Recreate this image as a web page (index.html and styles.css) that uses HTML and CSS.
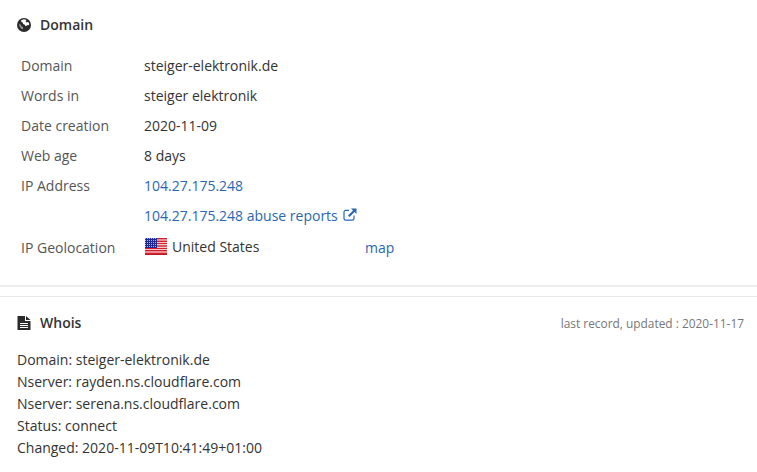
FILE: index.html
```html
<!DOCTYPE html>
<html lang="en">
<head>
<meta charset="utf-8">
<title>Domain</title>
<link rel="stylesheet" href="styles.css">
</head>
<body>
<section class="domain">
  <h2 class="head"><svg class="ico" viewBox="0 0 14 14"><circle cx="7" cy="7" r="7" fill="#2b2b2b"/><path fill="#fff" d="M4 2.200 7 1.200 9.500 2 8.500 3.200 9.800 4.500 11 3.800 12.300 5.800 12 7 10.300 7.300 8.700 8.200 7.800 6.700 6.200 6 5.800 4.600 4.600 4.200z"/><path fill="#fff" d="M2 6l1.500.6 1 1.800 1.600.8-.3 2.300-1.500-1L2.600 8.500z" opacity=".55"/></svg>Domain</h2>
  <div class="grid">
    <div class="lbl">Domain</div><div>steiger-elektronik.de</div>
    <div class="lbl">Words in</div><div>steiger elektronik</div>
    <div class="lbl">Date creation</div><div>2020-11-09</div>
    <div class="lbl">Web age</div><div>8 days</div>
    <div class="lbl">IP Address</div><div><a href="#">104.27.175.248</a></div>
    <div></div><div><a href="#">104.27.175.248 abuse reports <svg class="ext" viewBox="0 0 14 13"><path fill="none" stroke="currentColor" stroke-width="1.200" d="M11 7.500v3a1.600 1.600 0 0 1-1.600 1.600H2.600A1.600 1.600 0 0 1 1 10.500V4a1.600 1.600 0 0 1 1.600-1.600H6"/><path fill="currentColor" d="M8 .5h5.500V6l-2-2-5 5-1.500-1.500 5-5z"/></svg></a></div>
    <div class="lbl geo">IP Geolocation</div>
    <div class="geo-val"><span class="country"><svg class="flag" viewBox="0 0 22 17"><defs><pattern id="stars" width="2" height="2" patternUnits="userSpaceOnUse"><rect width="2" height="2" fill="#1f2a96"/><rect width="1" height="1" fill="#aab0e0"/></pattern></defs><rect width="22" height="17" fill="#fff"/><path stroke="#d3202a" stroke-width="1.500" d="M0 .8h22M0 3.200h22M0 5.600h22M0 8h22M0 10.400h22M0 12.800h22M0 15.200h22"/><path stroke="#b81c24" stroke-width="1" d="M0 16.500h22"/><rect width="12" height="10" fill="url(#stars)"/></svg>United States</span><a href="#" class="map">map</a></div>
  </div>
</section>
<div class="rule"></div>
<section class="whois">
  <div class="whois-head"><h2 class="head"><svg class="ico" viewBox="0 0 14 14"><path fill="#2b2b2b" d="M0.500 0h7.500v5h5.500v9H0.500z"/><path fill="#2b2b2b" d="M9 0l4.500 4H9z"/><path stroke="#fff" d="M3 7.500h8M3 9.500h8M3 11.500h8"/></svg>Whois</h2><small>last record, updated : 2020-11-17</small></div>
  <p>Domain: steiger-elektronik.de</p>
  <p>Nserver: rayden.ns.cloudflare.com</p>
  <p>Nserver: serena.ns.cloudflare.com</p>
  <p>Status: connect</p>
  <p>Changed: 2020-11-09T10:41:49+01:00</p>
</section>
</body>
</html>
```
FILE: styles.css
```css
html, body { margin: 0; padding: 0; background: #fff; overflow: hidden; height: 472px; }
body { font-family: "Open Sans", sans-serif; font-size: 14px; color: #333; }
a { color: #2a66b0; text-decoration: none; }
.head { margin: 0; display: flex; align-items: center; gap: 9px; font-size: 14px; font-weight: 600; line-height: 20px; }
.ico { width: 14px; height: 14px; }
.domain { padding: 15px 17px 0; height: 271px; box-sizing: border-box; }
.grid { margin: 15px 0 0 4px; display: grid; grid-template-columns: 123px 1fr; grid-auto-rows: 30px; align-items: center; }
.lbl { color: #555; }
.geo { padding-top: 4px; }
.ext { width: 14px; height: 13px; margin-left: 2px; }
.geo-val { display: flex; align-items: center; padding-top: 2px; }
.country { width: 221px; display: flex; align-items: center; gap: 5px; }
.flag { width: 22px; height: 17px; margin-left: 1px; }
.map { padding-top: 2px; }
.rule { height: 12px; border-top: 2px solid #eee; border-bottom: 1px solid #e8e8e8; margin-top: 14px; box-sizing: border-box; }
.whois { padding: 16px 13px 0 17px; }
.whois-head { display: flex; justify-content: space-between; align-items: center; margin-bottom: 16px; }
small { font-size: 11.900px; color: #777; }
p { margin: 0; line-height: 22px; }
```
